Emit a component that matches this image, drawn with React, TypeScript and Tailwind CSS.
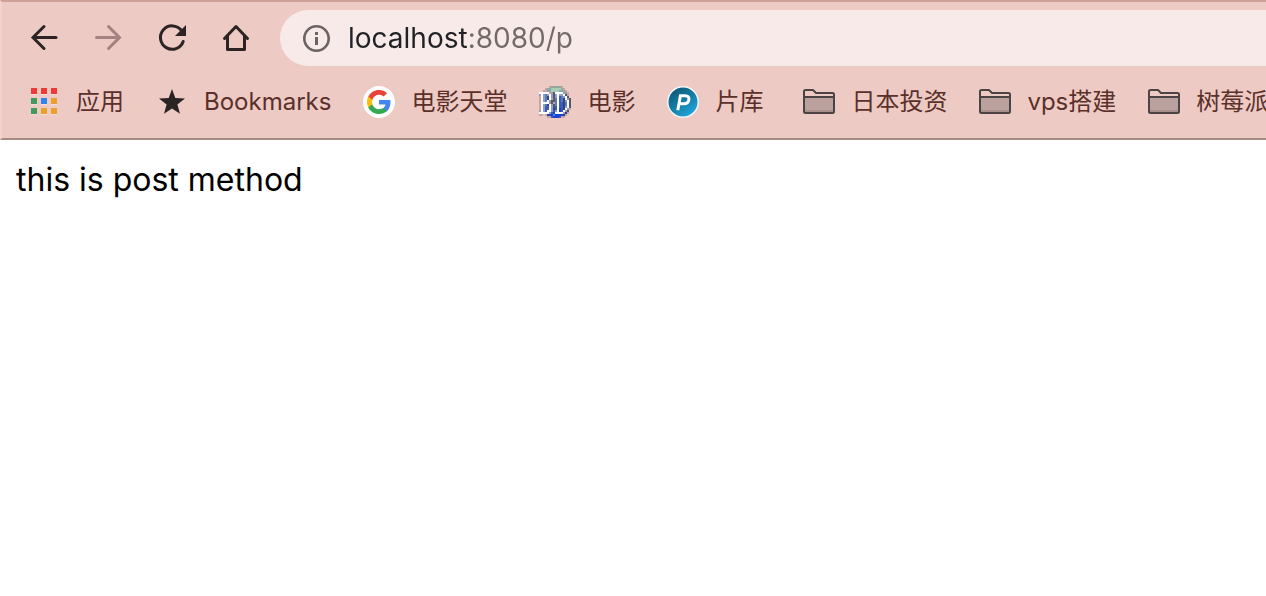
import type { ReactNode } from "react";

const tiles = [
  "#ee3a36", "#ee3a36", "#ee3a36",
  "#3f9a5c", "#2f83ec", "#eca02c",
  "#3f9a5c", "#eca02c", "#eca02c",
];

function AppsIcon() {
  return (
    <svg viewBox="0 0 32 32" className="size-8" aria-hidden="true">
      {tiles.map((c, i) => (
        <g key={i}>
          <rect x={3 + (i % 3) * 10} y={3 + Math.floor(i / 3) * 10} width="6" height="6" fill="#f8dcd8" />
          <rect x={3 + (i % 3) * 10} y={2 + Math.floor(i / 3) * 10} width="6" height="6" fill={c} />
        </g>
      ))}
    </svg>
  );
}

function StarIcon() {
  return (
    <svg viewBox="0 0 32 32" className="size-8" aria-hidden="true">
      <path d="M16 3l3.300 9.100 9.700.4-7.600 6 2.600 9.300-8-5.300-8 5.300 2.600-9.300-7.600-6 9.700-.4z" fill="#2b2425" />
    </svg>
  );
}

function GoogleIcon() {
  return (
    <svg viewBox="0 0 32 32" className="size-8" aria-hidden="true">
      <circle cx="16" cy="16" r="16" fill="#fff" />
      <g transform="translate(4 4)">
        <path fill="#4285f4" d="M23.500 12.300c0-.9-.1-1.600-.2-2.400H12v4.700h6.500c-.3 1.500-1.100 2.800-2.400 3.600v3h3.900c2.200-2.100 3.500-5.200 3.500-8.900z" />
        <path fill="#34a853" d="M12 24c3.200 0 6-1.100 8-2.900l-3.900-3c-1.100.7-2.400 1.200-4.100 1.200-3.100 0-5.800-2.100-6.700-5H1.300v3.100C3.300 21.300 7.300 24 12 24z" />
        <path fill="#fbbc05" d="M5.300 14.300a7.200 7.200 0 010-4.600V6.600h-4a12 12 0 000 10.800z" />
        <path fill="#ea4335" d="M12 4.800c1.800 0 3.300.6 4.600 1.800L20 3.200C17.900 1.200 15.200 0 12 0 7.300 0 3.300 2.700 1.300 6.600l4 3.100c.9-2.800 3.600-4.900 6.700-4.900z" />
      </g>
    </svg>
  );
}

const palette: Record<string, string> = {
  w: "#ffffff", p: "#c9a3a6", g: "#8fa99c", l: "#a9cdb4", s: "#8f9dc4",
  m: "#5c7cb8", b: "#3c5cb4", d: "#2f4488", u: "#1c3fd6", k: "#5b5668", c: "#3a8fe0",
};

const pixels = [
  ".....pgggggp....",
  "...pgglllllgp...",
  "..ppsgllllgggp..",
  "wwwwwpgkwwwwsgp.",
  "swsmswskswsswkp.",
  "pwsmdwskswbmswk.",
  "pwsmdwpkmwbmdwsk",
  "pwsmwskkmwbmdswk",
  "pwwwwskpmwbbdmwk",
  "pwsmdwskmwbbdmwk",
  "pwsbbwskbwbbdswk",
  "pwsbbwsdbwubdwsp",
  "swsbwwsbswubwsk.",
  "wwwwwsbuwwwwsdp.",
  "pp.pduucuuuudp..",
  "....ppbuuubpp...",
];

function BdIcon() {
  return (
    <svg viewBox="0 0 16 16" className="size-8" shapeRendering="crispEdges" aria-hidden="true">
      {pixels.flatMap((row, y) =>
        row.split("").map((k, x) =>
          k === "." ? null : <rect key={`${x}-${y}`} x={x} y={y} width="1" height="1" fill={palette[k]} />,
        ),
      )}
    </svg>
  );
}

function PIcon() {
  return (
    <svg viewBox="0 0 32 32" className="size-8" aria-hidden="true">
      <defs>
        <linearGradient id="disc" x1="0.2" y1="0.1" x2="0.8" y2="0.95">
          <stop offset="0" stopColor="#0f5c7c" />
          <stop offset="0.45" stopColor="#137ba3" />
          <stop offset="1" stopColor="#22a9e0" />
        </linearGradient>
      </defs>
      <circle cx="16" cy="16" r="15.200" fill="url(#disc)" stroke="#f4f8fa" strokeWidth="1.400" />
      <path
        d="M10.800 24.200L13.400 9.800h4.600c3 0 4.300 1.500 3.900 4-.4 2.600-2.200 4-5.100 4h-3.700"
        fill="none" stroke="#fff" strokeWidth="3"
      />
    </svg>
  );
}

function FolderIcon() {
  return (
    <svg viewBox="0 0 32 32" className="size-8" aria-hidden="true">
      <path d="M1 11h30v16H1z" fill="#bba19e" />
      <path d="M1 24h30v3H1z" fill="#a68f8c" />
      <path
        d="M1 25.500V5.500Q1 4 2.500 4H10l3 3h16.500Q31 7 31 8.500V25.500q0 1.500-1.500 1.500h-27Q1 27 1 25.500zM1 11h30"
        fill="none" stroke="#4b4344" strokeWidth="2" strokeLinejoin="round"
      />
    </svg>
  );
}

function NavButton({ label, disabled, children }: { label: string; disabled?: boolean; children: ReactNode }) {
  return (
    <button
      type="button"
      aria-label={label}
      disabled={disabled}
      className="flex size-8 items-center justify-center text-[#2b2324] disabled:text-[#a3827f]"
    >
      <svg viewBox="0 0 32 32" className="size-8" fill="none" stroke="currentColor" strokeWidth="3" aria-hidden="true">
        {children}
      </svg>
    </button>
  );
}

function Bookmark({ icon, label }: { icon: ReactNode; label: string }) {
  return (
    <li className="shrink-0">
      <a href="#" className="flex items-center gap-4 whitespace-nowrap">
        {icon}
        <span>{label}</span>
      </a>
    </li>
  );
}

export default function App() {
  return (
    <div className="min-h-screen bg-white font-['Inter','Noto_Sans_CJK_SC',sans-serif]">
      <header className="overflow-hidden border-t-2 border-b-2 border-l-2 border-t-[#cda096] border-b-[#a58b86] border-l-[#f3d2cd] bg-[#edcac4]">
        <div className="flex items-center pt-2 pl-[26px]">
          <nav aria-label="Navigation" className="flex shrink-0 gap-8">
            <NavButton label="Back">
              <path d="M28 15.500H5M16 4.500L5 15.500l11 11" strokeLinecap="round" />
            </NavButton>
            <NavButton label="Forward" disabled>
              <path d="M4.500 15.500H27.500M16.500 4.500l11 11-11 11" strokeLinecap="round" />
            </NavButton>
            <NavButton label="Reload">
              <path d="M25.500 8.500A11.700 11.700 0 1 0 27.200 19.500" strokeLinecap="round" />
              <path d="M30 3v11H19z" fill="currentColor" stroke="none" />
            </NavButton>
            <NavButton label="Home">
              <path d="M4.500 16.500L16 4.500l11.500 12M7.500 14v13.500h17V14" strokeLinejoin="round" strokeLinecap="round" />
            </NavButton>
          </nav>
          <div className="ml-7 flex h-14 flex-1 items-center rounded-l-full bg-[#f8eae8] pl-[22px]">
            <svg viewBox="0 0 28 28" className="size-7 shrink-0" aria-hidden="true">
              <circle cx="14.500" cy="14.500" r="12.200" fill="none" stroke="#6b6263" strokeWidth="2.600" />
              <path d="M13 13h3v8h-3zM13 8h3v3h-3z" fill="#6b6263" />
            </svg>
            <input
              type="text"
              aria-label="Address"
              defaultValue="localhost:8080/p"
              className="ml-[18px] h-10 min-w-0 flex-1 bg-[linear-gradient(90deg,#202124_119px,#736969_119px)] bg-clip-text text-[28px] text-transparent caret-black outline-none"
            />
          </div>
        </div>
        <ul className="flex h-18 items-center gap-8 pl-[26px] text-2xl text-[#5a3029]">
          <Bookmark icon={<AppsIcon />} label="应用" />
          <Bookmark icon={<StarIcon />} label="Bookmarks" />
          <Bookmark icon={<GoogleIcon />} label="电影天堂" />
          <Bookmark icon={<BdIcon />} label="电影" />
          <Bookmark icon={<PIcon />} label="片库" />
          <li className="shrink-0 pl-2">
            <ul className="flex gap-8">
              <Bookmark icon={<FolderIcon />} label="日本投资" />
              <Bookmark icon={<FolderIcon />} label="vps搭建" />
              <Bookmark icon={<FolderIcon />} label="树莓派" />
            </ul>
          </li>
        </ul>
      </header>
      <main className="px-4 pt-4">
        <p className="text-[32px] leading-12 text-black">this is post method</p>
      </main>
    </div>
  );
}
